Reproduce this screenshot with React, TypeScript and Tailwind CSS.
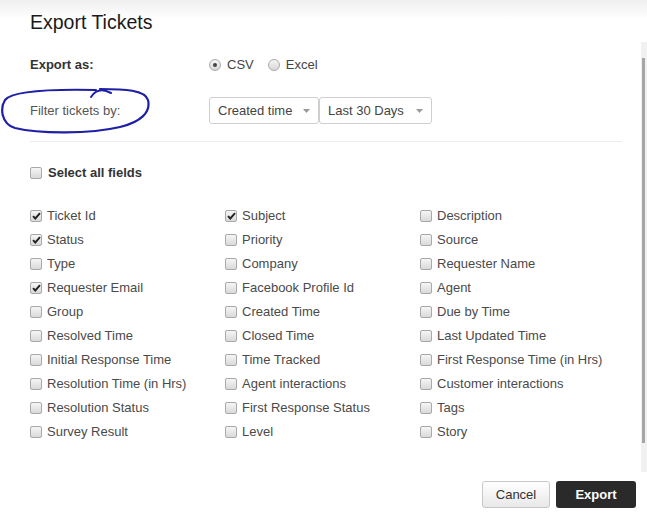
import type { FC } from "react";

const FIELDS: [string, boolean][][] = [
	[["Ticket Id", true], ["Subject", true], ["Description", false]],
	[["Status", true], ["Priority", false], ["Source", false]],
	[["Type", false], ["Company", false], ["Requester Name", false]],
	[["Requester Email", true], ["Facebook Profile Id", false], ["Agent", false]],
	[["Group", false], ["Created Time", false], ["Due by Time", false]],
	[["Resolved Time", false], ["Closed Time", false], ["Last Updated Time", false]],
	[["Initial Response Time", false], ["Time Tracked", false], ["First Response Time (in Hrs)", false]],
	[["Resolution Time (in Hrs)", false], ["Agent interactions", false], ["Customer interactions", false]],
	[["Resolution Status", false], ["First Response Status", false], ["Tags", false]],
	[["Survey Result", false], ["Level", false], ["Story", false]],
];

const Checkbox: FC<{ checked?: boolean }> = ({ checked }) => (
	<span className="relative w-[12px] h-[12px] shrink-0 rounded-[2px] border border-[#a9a9a9] bg-linear-to-b from-[#f6f6f6] to-[#d9d9d9] flex items-center justify-center">
		{checked && (
			<svg width="9" height="8" viewBox="0 0 9 8" className="block">
				<path d="M1 4.2 L3.3 6.5 L8 1.2" fill="none" stroke="#222" strokeWidth="1.9" />
			</svg>
		)}
	</span>
);

const Radio: FC<{ checked?: boolean }> = ({ checked }) => (
	<span className="w-[12px] h-[12px] shrink-0 rounded-full border border-[#a9a9a9] bg-linear-to-b from-[#f6f6f6] to-[#d6d6d6] flex items-center justify-center">
		{checked && <span className="w-[4px] h-[4px] rounded-full bg-[#444]" />}
	</span>
);

const Select: FC<{ label: string; width: string }> = ({ label, width }) => (
	<div className={`${width} h-[27px] border border-[#cfcfcf] rounded-[3px] bg-white flex items-center justify-between pl-[8px] pr-[8px] text-[13px] text-[#444]`}>
		<span>{label}</span>
		<svg width="7" height="4" viewBox="0 0 7 4">
			<path d="M0 0 L7 0 L3.5 4 Z" fill="#9a9a9a" />
		</svg>
	</div>
);

export default function App() {
	return (
		<div className="relative w-[647px] h-[513px] bg-white flex flex-col font-['Liberation_Sans',Arial,sans-serif] overflow-hidden">
			<header className="h-[42px] shrink-0 pl-[30px] pt-[11px] bg-linear-to-b from-[#efefef] via-white via-45% to-white">
				<h1 className="text-[19.5px] leading-[23px] text-[#1a1a1a] m-0 font-normal">Export Tickets</h1>
			</header>

			<div className="flex h-[430px] shrink-0">
				<div className="flex-1 pl-[30px] pr-[19px] pt-[11px]">
					<div className="h-[24px] flex items-center">
						<span className="w-[179px] text-[13px] font-bold text-[#333]">Export as:</span>
						<label className="flex items-center gap-[6px] text-[13px] text-[#444]">
							<Radio checked />
							CSV
						</label>
						<label className="ml-[14px] flex items-center gap-[6px] text-[13px] text-[#444]">
							<Radio />
							Excel
						</label>
					</div>

					<div className="mt-[20px] h-[27px] flex items-center">
						<span className="w-[179px] text-[13px] text-[#555]">Filter tickets by:</span>
						<Select label="Created time" width="w-[110px]" />
						<Select label="Last 30 Days" width="w-[113px]" />
					</div>

					<div className="mt-[17px] h-px bg-[#ececec]" />

					<label className="mt-[21px] h-[20px] flex items-center gap-[6px] text-[13px] font-bold text-[#333]">
						<Checkbox />
						Select all fields
					</label>

					<div className="mt-[21px] grid grid-cols-[195px_195px_1fr]">
						{FIELDS.flat().map(([name, checked]) => (
							<label key={name} className="h-[24px] flex items-center gap-[5px] text-[13px] text-[#4a4a4a]">
								<Checkbox checked={checked} />
								{name}
							</label>
						))}
					</div>
				</div>

				<div className="w-[6px] shrink-0 bg-[#f1f1f1] pt-[16px]">
					<div className="ml-[1px] w-[3px] h-[385px] bg-[#a6a6a6]" />
				</div>
			</div>

			<footer className="flex-1 flex justify-end items-start gap-[6px] pt-[9px] pr-[11px]">
				<button className="w-[68px] h-[27px] rounded-[3px] border border-[#c8c8c8] bg-linear-to-b from-white to-[#e8e8e8] text-[13px] text-[#333]">
					Cancel
				</button>
				<button className="w-[80px] h-[27px] rounded-[3px] bg-[#2a2a2a] text-[13px] font-bold text-white">
					Export
				</button>
			</footer>

			{/* hand-drawn annotation around the filter label */}
			<svg className="absolute left-0 top-0 pointer-events-none" width="160" height="140" viewBox="0 0 160 140">
				<path
					d="M100 89 C125 89 145 90 148 100 C151 112 141 122 120 127 C90 134 40 134 15 128 C1 124 0 108 5 100 C12 91 50 89 96 90"
					fill="none"
					stroke="#1f1fa6"
					strokeWidth="2.2"
					strokeLinecap="round"
				/>
				<path d="M91 97 Q98 86 111 93" fill="none" stroke="#1f1fa6" strokeWidth="2" strokeLinecap="round" />
			</svg>
		</div>
	);
}
